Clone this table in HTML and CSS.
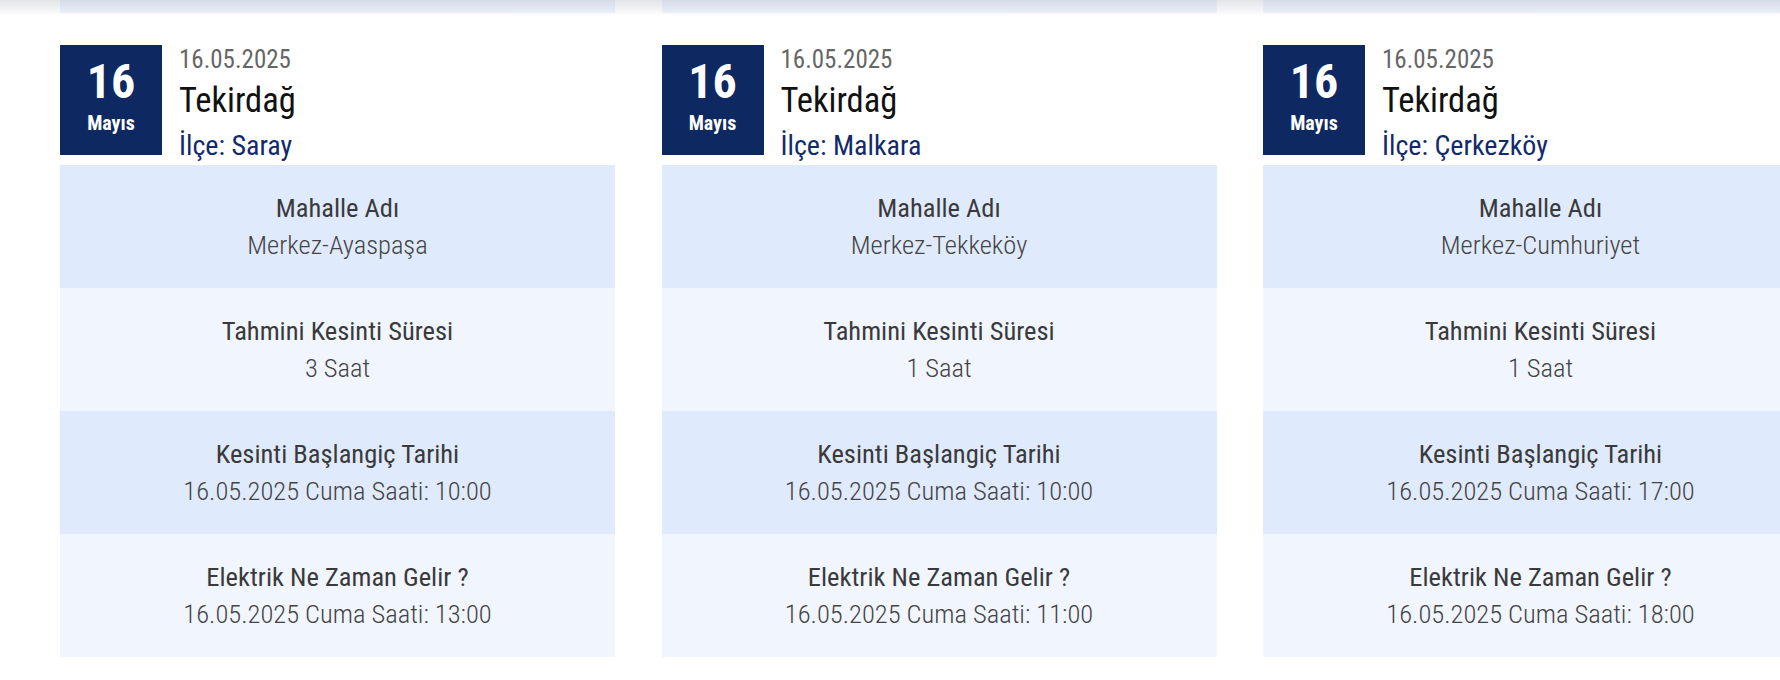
FILE: index.html
```html
<!DOCTYPE html>
<html lang="tr">
<head>
<meta charset="utf-8">
<title>Planlı Kesintiler</title>
<link rel="stylesheet" href="styles.css">
</head>
<body>
<div class="top-shadow"></div>
<main class="page">
  <div class="grid">
    <div class="tail"></div>
    <div class="tail"></div>
    <div class="tail"></div>

    <article class="card">
      <header class="card-head">
        <div class="datebox"><span class="day">16</span><span class="month">Mayıs</span></div>
        <div class="head-text">
          <div class="date">16.05.2025</div>
          <div class="city">Tekirdağ</div>
          <div class="district">İlçe: Saray</div>
        </div>
      </header>
      <div class="row dark"><div class="r-title">Mahalle Adı</div><div class="r-value">Merkez-Ayaspaşa</div></div>
      <div class="row light"><div class="r-title">Tahmini Kesinti Süresi</div><div class="r-value">3 Saat</div></div>
      <div class="row dark"><div class="r-title">Kesinti Başlangiç Tarihi</div><div class="r-value">16.05.2025 Cuma Saati: 10:00</div></div>
      <div class="row light"><div class="r-title">Elektrik Ne Zaman Gelir ?</div><div class="r-value">16.05.2025 Cuma Saati: 13:00</div></div>
    </article>

    <article class="card">
      <header class="card-head">
        <div class="datebox"><span class="day">16</span><span class="month">Mayıs</span></div>
        <div class="head-text">
          <div class="date">16.05.2025</div>
          <div class="city">Tekirdağ</div>
          <div class="district">İlçe: Malkara</div>
        </div>
      </header>
      <div class="row dark"><div class="r-title">Mahalle Adı</div><div class="r-value">Merkez-Tekkeköy</div></div>
      <div class="row light"><div class="r-title">Tahmini Kesinti Süresi</div><div class="r-value">1 Saat</div></div>
      <div class="row dark"><div class="r-title">Kesinti Başlangiç Tarihi</div><div class="r-value">16.05.2025 Cuma Saati: 10:00</div></div>
      <div class="row light"><div class="r-title">Elektrik Ne Zaman Gelir ?</div><div class="r-value">16.05.2025 Cuma Saati: 11:00</div></div>
    </article>

    <article class="card">
      <header class="card-head">
        <div class="datebox"><span class="day">16</span><span class="month">Mayıs</span></div>
        <div class="head-text">
          <div class="date">16.05.2025</div>
          <div class="city">Tekirdağ</div>
          <div class="district">İlçe: Çerkezköy</div>
        </div>
      </header>
      <div class="row dark"><div class="r-title">Mahalle Adı</div><div class="r-value">Merkez-Cumhuriyet</div></div>
      <div class="row light"><div class="r-title">Tahmini Kesinti Süresi</div><div class="r-value">1 Saat</div></div>
      <div class="row dark"><div class="r-title">Kesinti Başlangiç Tarihi</div><div class="r-value">16.05.2025 Cuma Saati: 17:00</div></div>
      <div class="row light"><div class="r-title">Elektrik Ne Zaman Gelir ?</div><div class="r-value">16.05.2025 Cuma Saati: 18:00</div></div>
    </article>
  </div>
</main>
</body>
</html>
```
FILE: styles.css
```css
html, body {
  margin: 0;
  padding: 0;
  background: #ffffff;
  overflow: hidden;
}
body {
  font-family: "Roboto Condensed", Roboto, "Liberation Sans", sans-serif;
  width: 1780px;
  height: 680px;
}
.top-shadow {
  position: fixed;
  left: 0;
  right: 0;
  top: 0;
  height: 16px;
  background: linear-gradient(to bottom, rgba(20, 30, 60, 0.12), rgba(20, 30, 60, 0));
  pointer-events: none;
  z-index: 5;
}
.page {
  padding-left: 60px;
}
.grid {
  display: grid;
  grid-template-columns: repeat(3, 555px);
  column-gap: 46.5px;
  row-gap: 32px;
}
.tail {
  height: 13px;
  background: #f0f5fe;
}
.card {
  display: flex;
  flex-direction: column;
}
.card-head {
  display: flex;
  align-items: flex-start;
  gap: 17px;
  height: 110px;
  margin-bottom: 10px;
}
.datebox {
  width: 102px;
  height: 110px;
  flex: none;
  box-sizing: border-box;
  padding-top: 13px;
  background: #0e2862;
  color: #ffffff;
  display: flex;
  flex-direction: column;
  align-items: center;
  font-weight: 700;
}
.day {
  font-size: 48px;
  line-height: 48px;
}
.month {
  font-size: 20px;
  line-height: 20px;
  margin-top: 7px;
}
.head-text {
  display: flex;
  flex-direction: column;
}
.date {
  font-size: 25px;
  line-height: 30px;
  color: #666666;
}
.city {
  font-size: 34.5px;
  line-height: 50px;
  color: #111111;
}
.district {
  font-size: 28px;
  line-height: 28px;
  margin-top: 7px;
  color: #12296a;
}
.row {
  padding: 24px 10px 25px;
  text-align: center;
}
.row.dark {
  background: #e0eafd;
}
.row.light {
  background: #f0f5fe;
}
.r-title {
  font-size: 26.5px;
  line-height: 37px;
  color: #3a3a3a;
}
.r-value {
  font-size: 26.5px;
  line-height: 37px;
  font-weight: 300;
  color: #444444;
}
```
